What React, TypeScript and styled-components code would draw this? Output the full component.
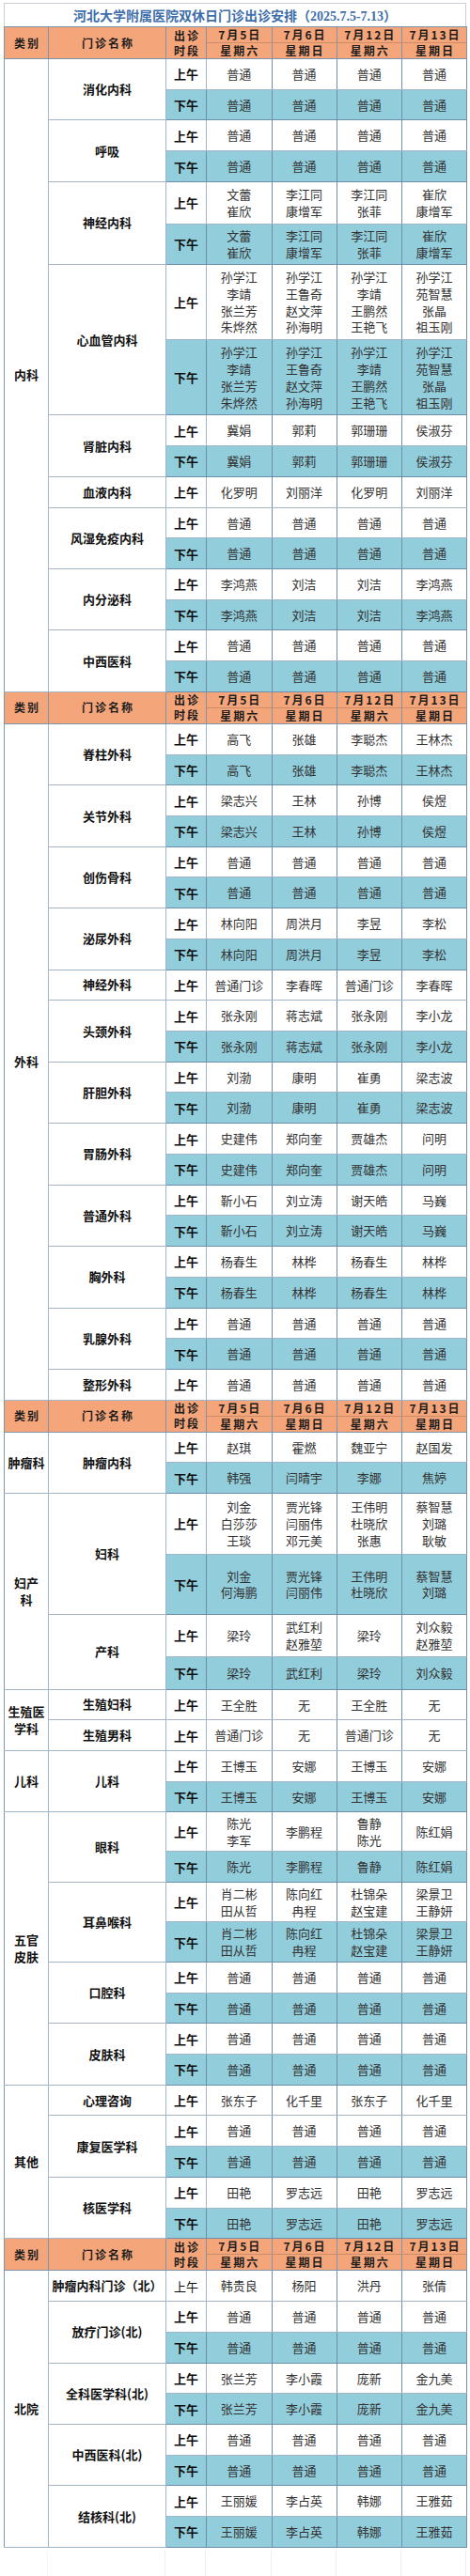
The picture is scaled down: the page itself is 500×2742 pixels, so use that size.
import React from 'react';
import styled, { createGlobalStyle, css } from 'styled-components';

const GlobalStyle = createGlobalStyle`
  html, body { margin: 0; padding: 0; background: #ffffff; }
  body {
    font-family: "Noto Sans CJK SC", "Liberation Sans", sans-serif;
  }
`;

const COLS = [47, 125, 43, 69.5, 69, 69.5, 69];
const STD = 32.72;
const DATES = ['7月5日', '7月6日', '7月12日', '7月13日'];
const WEEK = ['星期六', '星期日', '星期六', '星期日'];

type Slot = { slot: '上午' | '下午'; cells: string[][]; h: number; light?: boolean };
type Dept = { name: string; rows: Slot[] };
type Group = { cat: string[]; depts: Dept[] };

const split = (c: string[]) => c.map((s) => s.split('/'));
const am = (c: string[], h = STD, light = false): Slot => ({ slot: '上午', cells: split(c), h, light });
const pm = (c: string[], h = STD): Slot => ({ slot: '下午', cells: split(c), h });
const both = (c: string[], hA = STD, hP = STD): Slot[] => [am(c, hA), pm(c, hP)];
const P4 = ['普通', '普通', '普通', '普通'];

const SECTIONS: Group[][] = [
  [
    {
      cat: ['内科'],
      depts: [
        { name: '消化内科', rows: both(P4) },
        { name: '呼吸', rows: both(P4) },
        { name: '神经内科', rows: both(['文蕾/崔欣', '李江同/康增军', '李江同/张菲', '崔欣/康增军'], 45, 43) },
        {
          name: '心血管内科',
          rows: both(
            ['孙学江/李靖/张兰芳/朱烨然', '孙学江/王鲁奇/赵文萍/孙海明', '孙学江/李靖/王鹏然/王艳飞', '孙学江/苑智慧/张晶/祖玉刚'],
            80.5,
            80
          ),
        },
        { name: '肾脏内科', rows: both(['冀娟', '郭莉', '郭珊珊', '侯淑芬']) },
        { name: '血液内科', rows: [am(['化罗明', '刘丽洋', '化罗明', '刘丽洋'])] },
        { name: '风湿免疫内科', rows: both(P4) },
        { name: '内分泌科', rows: both(['李鸿燕', '刘洁', '刘洁', '李鸿燕']) },
        { name: '中西医科', rows: both(P4) },
      ],
    },
  ],
  [
    {
      cat: ['外科'],
      depts: [
        { name: '脊柱外科', rows: both(['高飞', '张雄', '李聪杰', '王林杰']) },
        { name: '关节外科', rows: both(['梁志兴', '王林', '孙博', '侯煜']) },
        { name: '创伤骨科', rows: both(P4) },
        { name: '泌尿外科', rows: both(['林向阳', '周洪月', '李昱', '李松']) },
        { name: '神经外科', rows: [am(['普通门诊', '李春晖', '普通门诊', '李春晖'])] },
        { name: '头颈外科', rows: both(['张永刚', '蒋志斌', '张永刚', '李小龙']) },
        { name: '肝胆外科', rows: both(['刘渤', '康明', '崔勇', '梁志波']) },
        { name: '胃肠外科', rows: both(['史建伟', '郑向奎', '贾雄杰', '问明']) },
        { name: '普通外科', rows: both(['靳小石', '刘立涛', '谢天皓', '马巍']) },
        { name: '胸外科', rows: both(['杨春生', '林桦', '杨春生', '林桦']) },
        { name: '乳腺外科', rows: both(P4) },
        { name: '整形外科', rows: [am(P4)] },
      ],
    },
  ],
  [
    {
      cat: ['肿瘤科'],
      depts: [
        {
          name: '肿瘤内科',
          rows: [am(['赵琪', '霍燃', '魏亚宁', '赵国发']), pm(['韩强', '闫晴宇', '李娜', '焦婷'])],
        },
      ],
    },
    {
      cat: ['妇产', '科'],
      depts: [
        {
          name: '妇科',
          rows: [
            am(['刘金/白莎莎/王琰', '贾光锋/闫丽伟/邓元美', '王伟明/杜晓欣/张惠', '蔡智慧/刘璐/耿敏'], 64.5),
            pm(['刘金/何海鹏', '贾光锋/闫丽伟', '王伟明/杜晓欣', '蔡智慧/刘璐'], 64.5),
          ],
        },
        {
          name: '产科',
          rows: [am(['梁玲', '武红利/赵雅堃', '梁玲', '刘众毅/赵雅堃'], 44.5), pm(['梁玲', '武红利', '梁玲', '刘众毅'], 35)],
        },
      ],
    },
    {
      cat: ['生殖医', '学科'],
      depts: [
        { name: '生殖妇科', rows: [am(['王全胜', '无', '王全胜', '无'])] },
        { name: '生殖男科', rows: [am(['普通门诊', '无', '普通门诊', '无'])] },
      ],
    },
    {
      cat: ['儿科'],
      depts: [{ name: '儿科', rows: both(['王博玉', '安娜', '王博玉', '安娜']) }],
    },
    {
      cat: ['五官', '皮肤'],
      depts: [
        {
          name: '眼科',
          rows: [am(['陈光/李军', '李鹏程', '鲁静/陈光', '陈红娟'], 42), pm(['陈光', '李鹏程', '鲁静', '陈红娟'])],
        },
        { name: '耳鼻喉科', rows: both(['肖二彬/田从哲', '陈向红/冉程', '杜锦朵/赵宝建', '梁景卫/王静妍'], 42.3, 42.4) },
        { name: '口腔科', rows: both(P4) },
        { name: '皮肤科', rows: both(P4) },
      ],
    },
    {
      cat: ['其他'],
      depts: [
        { name: '心理咨询', rows: [am(['张东子', '化千里', '张东子', '化千里'])] },
        { name: '康复医学科', rows: both(P4) },
        { name: '核医学科', rows: both(['田艳', '罗志远', '田艳', '罗志远']) },
      ],
    },
  ],
  [
    {
      cat: ['北院'],
      depts: [
        { name: '肿瘤内科门诊（北）', rows: [am(['韩贵良', '杨阳', '洪丹', '张倩'], STD, true)] },
        { name: '放疗门诊(北)', rows: both(P4) },
        { name: '全科医学科(北)', rows: both(['张兰芳', '李小霞', '庞新', '金九美']) },
        { name: '中西医科(北)', rows: both(P4) },
        { name: '结核科(北)', rows: both(['王丽媛', '李占英', '韩娜', '王雅茹']) },
      ],
    },
  ],
];

const Page = styled.div`
  padding: 3px 4px 0 4px;
  width: 492px;
`;

const TitleBar = styled.div`
  height: 24px;
  border: 1px solid #c9ced6;
  border-bottom: none;
  display: flex;
  align-items: center;
  justify-content: center;
  color: #3f6faa;
  font-family: "Liberation Serif", "Noto Sans CJK SC", serif;
  font-weight: 700;
  font-size: 14px;
  letter-spacing: 0;
  white-space: nowrap;
`;

const Table = styled.table`
  width: 492px;
  table-layout: fixed;
  border-collapse: collapse;
  border-spacing: 0;
`;

const Col = styled.col<{ $w: number }>`
  width: ${(p) => p.$w}px;
`;

const Row = styled.tr<{ $h: number }>`
  height: ${(p) => p.$h}px;
`;

const HeadCell = styled.th<{ $part?: 'top' | 'bottom' }>`
  padding: 0 0 0 2px;
  background: #f5a57a;
  color: #1c1c1c;
  font-size: 12px;
  font-weight: 700;
  letter-spacing: 2px;
  line-height: 16px;
  text-align: center;
  vertical-align: middle;
  border: 1px solid #7d93aa;
  white-space: nowrap;
  ${(p) =>
    p.$part === 'top' &&
    css`
      border-bottom: 1px solid #c98d6a;
    `}
  ${(p) =>
    p.$part === 'bottom' &&
    css`
      border-top: 1px solid #c98d6a;
    `}
`;

const cellBase = css`
  padding: 0 2px;
  text-align: center;
  vertical-align: middle;
  border: 1px solid #a3b5c8;
  font-size: 13px;
`;

const CategoryCell = styled.td`
  ${cellBase};
  font-weight: 700;
  color: #111;
  line-height: 18px;
  border-left-color: #7f97b0;
`;

const DeptCell = styled.td`
  ${cellBase};
  font-weight: 700;
  color: #111;
  line-height: 18px;
  white-space: nowrap;
  letter-spacing: 0;
`;

const SlotCell = styled.td<{ $pm: boolean; $light?: boolean }>`
  ${cellBase};
  font-weight: ${(p) => (p.$light ? 400 : 700)};
  color: #0d0d0d;
  background: ${(p) => (p.$pm ? '#92cddc' : '#ffffff')};
  border-color: ${(p) => (p.$pm ? '#6b8fab' : '#a3b5c8')};
`;

const NameCell = styled.td<{ $pm: boolean }>`
  ${cellBase};
  color: #333;
  line-height: 17.7px;
  white-space: nowrap;
  background: ${(p) => (p.$pm ? '#92cddc' : '#ffffff')};
  border-color: ${(p) => (p.$pm ? '#6b8fab' : '#a3b5c8')};
  border-left-color: #6f8fab;
  border-right-color: #6f8fab;
`;

const NameLine = styled.div`
  display: block;
`;

const GhostGrid = styled.div`
  display: flex;
  height: 28px;
  margin-top: 2px;
`;

const GhostCol = styled.div<{ $w: number; $first?: boolean }>`
  width: ${(p) => p.$w}px;
  flex: none;
  box-sizing: border-box;
  border-right: 1px solid ${(p) => (p.$first ? '#f3f4f6' : '#eceef1')};
`;

function Header() {
  return (
    <>
      <Row $h={16.9}>
        <HeadCell rowSpan={2}>类别</HeadCell>
        <HeadCell rowSpan={2}>门诊名称</HeadCell>
        <HeadCell rowSpan={2}>
          出诊
          <br />
          时段
        </HeadCell>
        {DATES.map((d, i) => (
          <HeadCell key={i} $part="top">
            {d}
          </HeadCell>
        ))}
      </Row>
      <Row $h={16.7}>
        {WEEK.map((w, i) => (
          <HeadCell key={i} $part="bottom">
            {w}
          </HeadCell>
        ))}
      </Row>
    </>
  );
}

function GroupRows({ group }: { group: Group }) {
  const total = group.depts.reduce((n, d) => n + d.rows.length, 0);
  const out: React.ReactNode[] = [];
  group.depts.forEach((dept, di) => {
    dept.rows.forEach((r, ri) => {
      const isPm = r.slot === '下午';
      out.push(
        <Row key={`${di}-${ri}`} $h={r.h}>
          {di === 0 && ri === 0 && (
            <CategoryCell rowSpan={total}>
              {group.cat.map((c, ci) => (
                <NameLine key={ci}>{c}</NameLine>
              ))}
            </CategoryCell>
          )}
          {ri === 0 && <DeptCell rowSpan={dept.rows.length}>{dept.name}</DeptCell>}
          <SlotCell $pm={isPm} $light={r.light}>
            {r.slot}
          </SlotCell>
          {r.cells.map((lines, ci) => (
            <NameCell key={ci} $pm={isPm}>
              {lines.map((l, li) => (
                <NameLine key={li}>{l}</NameLine>
              ))}
            </NameCell>
          ))}
        </Row>
      );
    });
  });
  return <>{out}</>;
}

export default function App() {
  return (
    <>
      <GlobalStyle />
      <Page>
        <TitleBar>河北大学附属医院双休日门诊出诊安排（2025.7.5-7.13）</TitleBar>
        <Table>
          <colgroup>
            {COLS.map((w, i) => (
              <Col key={i} $w={w} />
            ))}
          </colgroup>
          {SECTIONS.map((sec, si) => (
            <tbody key={si}>
              <Header />
              {sec.map((g, gi) => (
                <GroupRows key={gi} group={g} />
              ))}
            </tbody>
          ))}
        </Table>
        <GhostGrid>
          {COLS.map((w, i) => (
            <GhostCol key={i} $w={w} $first={i === 0} />
          ))}
        </GhostGrid>
      </Page>
    </>
  );
}
